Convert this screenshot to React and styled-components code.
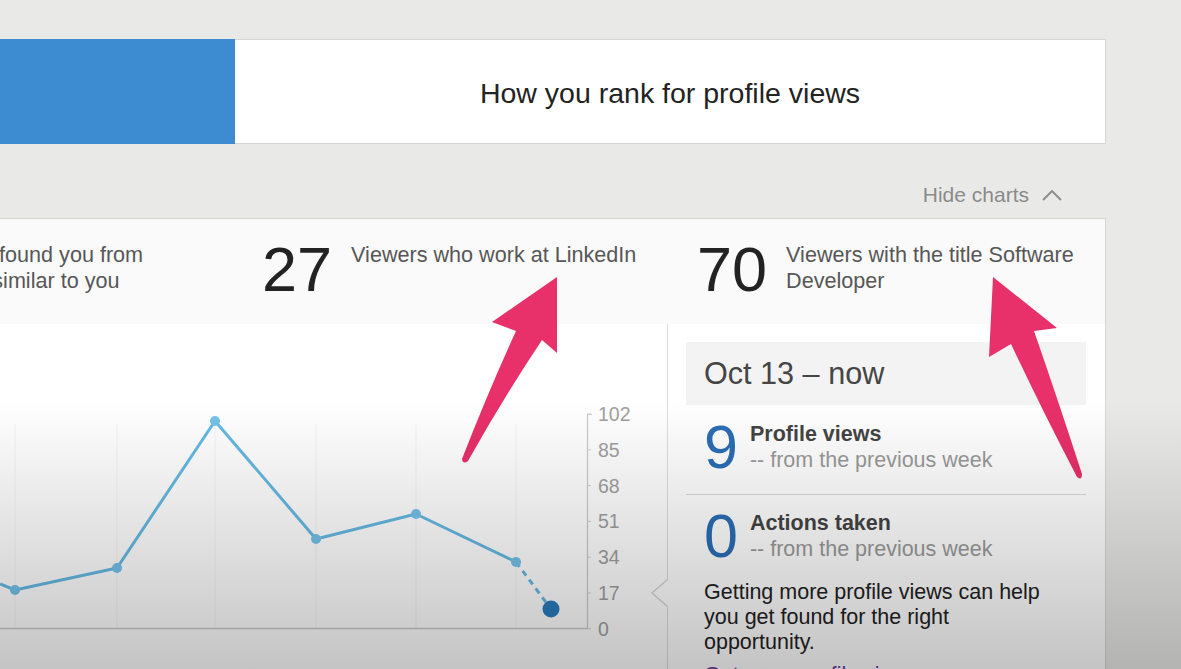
import React from 'react';
import styled, { createGlobalStyle } from 'styled-components';

const GlobalStyle = createGlobalStyle`
  html, body {
    margin: 0;
    padding: 0;
    background: #e9eae8;
    font-family: "Liberation Sans", Arial, Helvetica, sans-serif;
    overflow: hidden;
  }
`;

const Page = styled.div`
  position: relative;
  width: 1181px;
  height: 669px;
  overflow: hidden;
  padding-top: 39px;
  box-sizing: border-box;
`;

const RankCard = styled.div`
  display: flex;
  height: 105px;
  margin-right: 75px;
  background: #fff;
  border: 1px solid #d6d7d5;
  border-left: none;
  box-sizing: border-box;
`;

const BlueBar = styled.div`
  flex: 0 0 235px;
  background: #3d8bd0;
  margin: -1px 0;
`;

const RankTitle = styled.div`
  flex: 1;
  display: flex;
  align-items: center;
  justify-content: center;
  font-size: 28.5px;
  color: #232323;
  padding-top: 4px;
`;

const HideRow = styled.div`
  display: flex;
  justify-content: flex-end;
  align-items: center;
  gap: 12px;
  height: 74px;
  padding: 28px 118px 0 0;
  box-sizing: border-box;
  font-size: 21px;
  color: #8a8a8a;
`;

const StatsCard = styled.div`
  margin-right: 75px;
  background: #fff;
  border: 1px solid #d6d7d5;
  border-left: none;
  height: 460px;
  overflow: hidden;
`;

const StatsRow = styled.div`
  display: flex;
  height: 105px;
  box-sizing: border-box;
  padding-top: 19px;
  margin-left: -183px;
  background: #fafafa;
`;

const Stat = styled.div`
  flex: 0 0 ${(p) => p.$width}px;
  display: flex;
  gap: 19px;
`;

const StatNumber = styled.div`
  font-size: 63px;
  line-height: 1;
  color: #222;
`;

const StatText = styled.div`
  max-width: 300px;
  margin-top: 4px;
  font-size: 21.6px;
  line-height: 26px;
  color: #575757;
`;

const Body = styled.div`
  display: flex;
  height: 355px;
`;

const ChartPanel = styled.div`
  flex: 0 0 667px;
`;

const SidePanel = styled.div`
  position: relative;
  flex: 1;
  border-left: 1px solid #dcdcdc;
  padding: 18px 19px 0 18px;

  &::before,
  &::after {
    content: '';
    position: absolute;
    top: 255px;
    border-top: 14px solid transparent;
    border-bottom: 14px solid transparent;
  }
  &::before {
    left: -17px;
    border-right: 16px solid #d4d4d4;
  }
  &::after {
    left: -15px;
    border-right: 16px solid #fff;
  }
`;

const RangeBox = styled.div`
  height: 63px;
  display: flex;
  align-items: center;
  padding-left: 18px;
  background: #f3f3f3;
  font-size: 30.6px;
  color: #454545;
`;

const MetricRow = styled.div`
  display: flex;
  gap: 12px;
  padding: ${(p) => (p.$divided ? '12px 0 16px 18px' : '11px 0 0 18px')};
  border-bottom: ${(p) => (p.$divided ? '1px solid #dadada' : 'none')};
`;

const MetricNumber = styled.div`
  font-size: 61px;
  line-height: 1;
  color: #2b6db5;
`;

const MetricLabel = styled.div`
  margin-top: 4px;
  font-size: 21.5px;
  line-height: 26px;
  color: #9a9a9a;

  strong {
    display: block;
    color: #444;
  }
`;

const Tip = styled.p`
  width: 356px;
  margin: 13px 0 0;
  padding-left: 18px;
  font-size: 21.5px;
  line-height: 25px;
  color: #222;
`;

const TipLink = styled.a`
  display: block;
  margin-top: 8px;
  color: #6a3fa0;
  text-decoration: none;
`;

const Annotations = styled.svg`
  position: absolute;
  inset: 0;
  pointer-events: none;
`;

const Shade = styled.div`
  position: absolute;
  inset: 0;
  pointer-events: none;
  background: linear-gradient(
    180deg,
    rgba(0, 0, 0, 0) 0%,
    rgba(0, 0, 0, 0) 60%,
    rgba(0, 0, 0, 0.23) 100%
  );
`;

const points = [
  [0, 583],
  [15, 589],
  [117, 567],
  [215, 420],
  [316, 538],
  [416, 513],
  [516, 561],
];
const ticks = ['102', '85', '68', '51', '34', '17', '0'];
const TOP = 323;

const Chart = () => {
  const line = points.map(([x, y]) => `${x},${y - TOP}`).join(' ');
  return (
    <svg width="667" height="355" viewBox="0 0 667 355">
      {[15, 117, 215, 316, 416, 516].map((x) => (
        <line key={x} x1={x} y1={100} x2={x} y2={304} stroke="#f3f3f3" strokeWidth="1" />
      ))}
      <line x1="0" y1="304.5" x2="587" y2="304.5" stroke="#c9c9c9" strokeWidth="1.5" />
      <path d="M592 90.5 H587.5 V305" fill="none" stroke="#c9c9c9" strokeWidth="1.2" />
      {ticks.map((t, i) => {
        const y = 90 + i * 35.8;
        return (
          <g key={t}>
            <line x1="587" y1={y} x2="591" y2={y} stroke="#d0d0d0" strokeWidth="1" />
            <text
              x="598"
              y={y + 7}
              fontSize="19.5"
              fill="#a0a0a0"
              fontFamily="Liberation Sans, Arial, sans-serif"
            >
              {t}
            </text>
          </g>
        );
      })}
      <polyline points={line} fill="none" stroke="#66b9e3" strokeWidth="3" strokeLinejoin="round" />
      <line
        x1="516"
        y1={561 - TOP}
        x2="551"
        y2={608 - TOP}
        stroke="#66b9e3"
        strokeWidth="3"
        strokeDasharray="6 5"
      />
      {points.slice(1).map(([x, y]) => (
        <circle key={x} cx={x} cy={y - TOP} r="5" fill="#74c2ea" />
      ))}
      <circle cx="551" cy={608 - TOP} r="8.5" fill="#2a7cbd" />
    </svg>
  );
};

const App = () => (
  <>
    <GlobalStyle />
    <Page>
      <RankCard>
        <BlueBar />
        <RankTitle>How you rank for profile views</RankTitle>
      </RankCard>

      <HideRow>
        Hide charts
        <svg width="22" height="14" viewBox="0 0 22 14">
          <path d="M2 12 L11 3 L20 12" fill="none" stroke="#8a8a8a" strokeWidth="1.8" />
        </svg>
      </HideRow>

      <StatsCard>
        <StatsRow>
          <Stat $width={445}>
            <StatNumber>8</StatNumber>
            <StatText>
              Viewers who found you from
              <br />
              occupations similar to you
            </StatText>
          </Stat>
          <Stat $width={435}>
            <StatNumber>27</StatNumber>
            <StatText>Viewers who work at LinkedIn</StatText>
          </Stat>
          <Stat $width={435}>
            <StatNumber>70</StatNumber>
            <StatText>Viewers with the title Software Developer</StatText>
          </Stat>
        </StatsRow>

        <Body>
          <ChartPanel>
            <Chart />
          </ChartPanel>
          <SidePanel>
            <RangeBox>Oct 13 – now</RangeBox>
            <MetricRow $divided>
              <MetricNumber>9</MetricNumber>
              <MetricLabel>
                <strong>Profile views</strong>
                -- from the previous week
              </MetricLabel>
            </MetricRow>
            <MetricRow>
              <MetricNumber>0</MetricNumber>
              <MetricLabel>
                <strong>Actions taken</strong>
                -- from the previous week
              </MetricLabel>
            </MetricRow>
            <Tip>
              Getting more profile views can help you get found for the right opportunity.
              <TipLink href="#">Get more profile views</TipLink>
            </Tip>
          </SidePanel>
        </Body>
      </StatsCard>

      <Annotations width="1181" height="669" viewBox="0 0 1181 669">
        <path
          d="M557 277 L557 353 L542 340 Q502 400 468 461 Q463 465 462 459 Q488 392 516 331 L492 322 Z"
          fill="#e8306a"
        />
        <path
          d="M993 277 L1057 328 L1034 331 Q1058 400 1082 474 Q1082 481 1077 477 Q1042 410 1011 344 L989 357 Z"
          fill="#e8306a"
        />
      </Annotations>
      <Shade />
    </Page>
  </>
);

export default App;
